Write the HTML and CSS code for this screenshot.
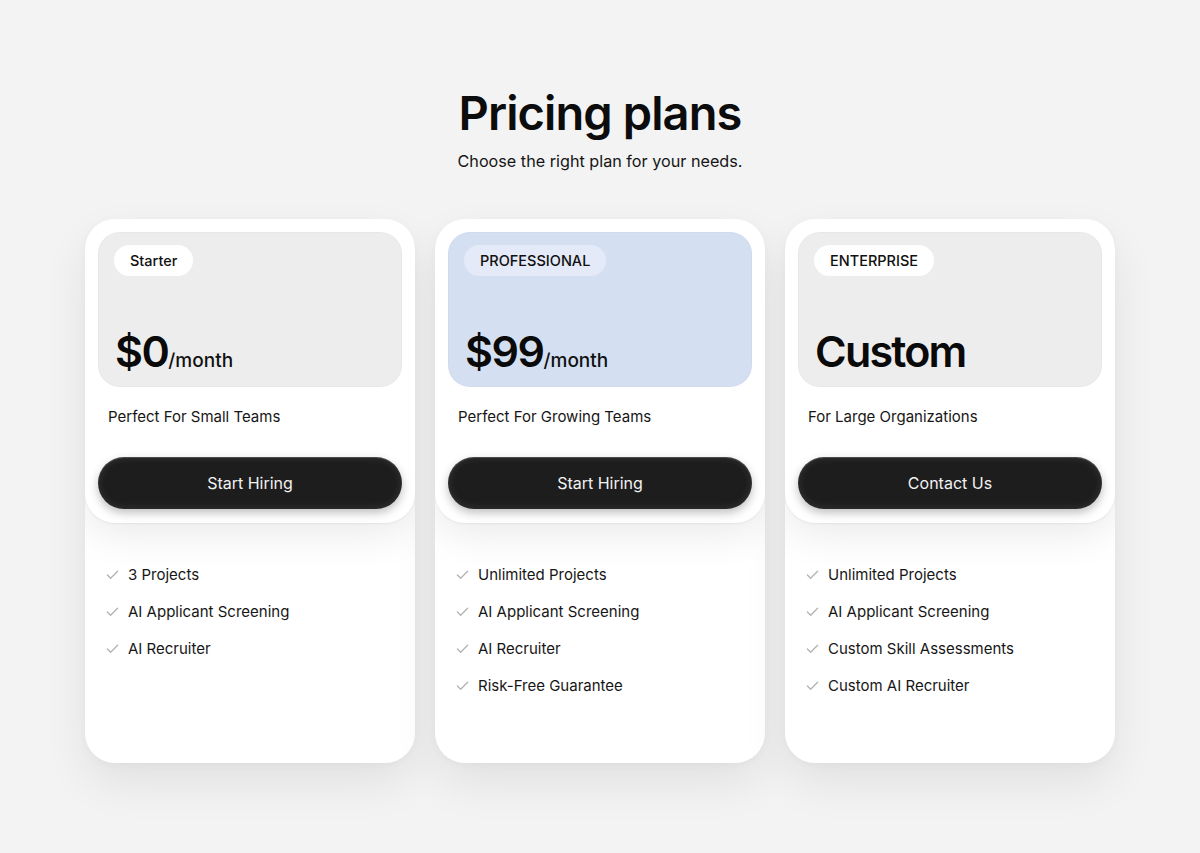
FILE: index.html
```html
<!DOCTYPE html>
<html lang="en">
<head>
<meta charset="utf-8">
<title>Pricing plans</title>
<link rel="stylesheet" href="styles.css">
</head>
<body>
<main class="page">
  <header class="intro">
    <h1 class="title">Pricing plans</h1>
    <p class="subtitle">Choose the right plan for your needs.</p>
  </header>
  <section class="plans">
    <article class="plan">
      <div class="plan-top">
        <div class="plan-hero hero-grey">
          <span class="badge">Starter</span>
          <div class="price"><span class="amount">$0</span><span class="period">/month</span></div>
        </div>
        <p class="plan-desc">Perfect For Small Teams</p>
        <button class="cta">Start Hiring</button>
      </div>
      <ul class="features">
        <li><svg class="check" viewBox="0 0 14 14"><path d="M1.5 7.5 L5 11 L12.5 3.5"/></svg>3 Projects</li>
        <li><svg class="check" viewBox="0 0 14 14"><path d="M1.5 7.5 L5 11 L12.5 3.5"/></svg>AI Applicant Screening</li>
        <li><svg class="check" viewBox="0 0 14 14"><path d="M1.5 7.5 L5 11 L12.5 3.5"/></svg>AI Recruiter</li>
      </ul>
    </article>
    <article class="plan">
      <div class="plan-top">
        <div class="plan-hero hero-blue">
          <span class="badge badge-blue">PROFESSIONAL</span>
          <div class="price"><span class="amount">$99</span><span class="period">/month</span></div>
        </div>
        <p class="plan-desc">Perfect For Growing Teams</p>
        <button class="cta">Start Hiring</button>
      </div>
      <ul class="features">
        <li><svg class="check" viewBox="0 0 14 14"><path d="M1.5 7.5 L5 11 L12.5 3.5"/></svg>Unlimited Projects</li>
        <li><svg class="check" viewBox="0 0 14 14"><path d="M1.5 7.5 L5 11 L12.5 3.5"/></svg>AI Applicant Screening</li>
        <li><svg class="check" viewBox="0 0 14 14"><path d="M1.5 7.5 L5 11 L12.5 3.5"/></svg>AI Recruiter</li>
        <li><svg class="check" viewBox="0 0 14 14"><path d="M1.5 7.5 L5 11 L12.5 3.5"/></svg>Risk-Free Guarantee</li>
      </ul>
    </article>
    <article class="plan">
      <div class="plan-top">
        <div class="plan-hero hero-grey">
          <span class="badge">ENTERPRISE</span>
          <div class="price"><span class="amount amount-custom">Custom</span></div>
        </div>
        <p class="plan-desc">For Large Organizations</p>
        <button class="cta">Contact Us</button>
      </div>
      <ul class="features">
        <li><svg class="check" viewBox="0 0 14 14"><path d="M1.5 7.5 L5 11 L12.5 3.5"/></svg>Unlimited Projects</li>
        <li><svg class="check" viewBox="0 0 14 14"><path d="M1.5 7.5 L5 11 L12.5 3.5"/></svg>AI Applicant Screening</li>
        <li><svg class="check" viewBox="0 0 14 14"><path d="M1.5 7.5 L5 11 L12.5 3.5"/></svg>Custom Skill Assessments</li>
        <li><svg class="check" viewBox="0 0 14 14"><path d="M1.5 7.5 L5 11 L12.5 3.5"/></svg>Custom AI Recruiter</li>
      </ul>
    </article>
  </section>
</main>
</body>
</html>
```

FILE: styles.css
```css
* { box-sizing: border-box; }

html, body {
  margin: 0;
  padding: 0;
  background: #f3f3f3;
  font-family: Inter, "Noto Sans", "Liberation Sans", sans-serif;
  color: #111;
}

body {
  min-height: 853px;
}

.page {
  width: 1030px;
  margin: 0 auto;
  padding: 84px 0 90px;
}

.intro {
  text-align: center;
}

.title {
  margin: 0;
  font-size: 47px;
  line-height: 58px;
  font-weight: 600;
  letter-spacing: -0.9px;
  color: #0c0c0c;
}

.subtitle {
  margin: 8px 0 0;
  font-size: 16.2px;
  line-height: 22px;
  color: #151515;
}

.plans {
  margin-top: 47px;
  display: grid;
  grid-template-columns: repeat(3, 330px);
  gap: 20px;
}

.plan {
  height: 544px;
  background: #fff;
  border-radius: 30px;
  overflow: hidden;
  box-shadow: 0 20px 45px rgba(0, 0, 0, 0.075), 0 2px 8px rgba(0, 0, 0, 0.03);
  display: flex;
  flex-direction: column;
}

.plan-top {
  position: relative;
  z-index: 1;
  background: #fff;
  border-radius: 30px;
  padding: 13px 13px 14px;
  box-shadow: 0 10px 40px rgba(0, 0, 0, 0.09), 0 1px 2px rgba(0, 0, 0, 0.06);
}

.plan-hero {
  height: 155px;
  border-radius: 22px;
  padding: 12px 15px 13px;
  display: flex;
  flex-direction: column;
  justify-content: space-between;
  align-items: flex-start;
  border: 1px solid rgba(0, 0, 0, 0.025);
}

.hero-grey { background: #ededed; }
.hero-blue { background: #d4e0f1; }

.badge {
  height: 31px;
  line-height: 31px;
  padding: 0 16px;
  border-radius: 16px;
  background: #fff;
  font-size: 14.5px;
  font-weight: 500;
  color: #111;
}

.badge-blue { background: #e4eaf8; }

.price {
  display: flex;
  align-items: baseline;
  line-height: 1;
  padding-left: 1px;
}

.amount {
  font-size: 43px;
  font-weight: 600;
  letter-spacing: -1.5px;
  color: #0a0a0a;
}

.amount-custom {
  letter-spacing: -1.8px;
}

.period {
  font-size: 19px;
  font-weight: 500;
  color: #111;
}

.plan-desc {
  margin: 20px 0 0 10px;
  font-size: 15px;
  line-height: 20px;
  color: #161616;
}

.cta {
  display: block;
  width: 100%;
  height: 52px;
  margin-top: 30px;
  border: none;
  border-radius: 26px;
  background: #1d1d1d;
  color: #f2f2f2;
  font-family: inherit;
  font-size: 16px;
  font-weight: 400;
  box-shadow: inset 0 0 8px rgba(255, 255, 255, 0.12), inset 0 1px 1px rgba(255, 255, 255, 0.18), 0 4px 10px rgba(0, 0, 0, 0.25);
}

.features {
  list-style: none;
  margin: 0;
  padding: 41px 0 0 21px;
  flex: 1;
}

.features li {
  display: flex;
  align-items: center;
  height: 20px;
  margin-bottom: 17px;
  font-size: 15px;
  color: #161616;
}

.check {
  width: 13px;
  height: 13px;
  margin-right: 9px;
  fill: none;
  stroke: #b3b3b3;
  stroke-width: 1.4;
  stroke-linecap: round;
  stroke-linejoin: round;
}
```
